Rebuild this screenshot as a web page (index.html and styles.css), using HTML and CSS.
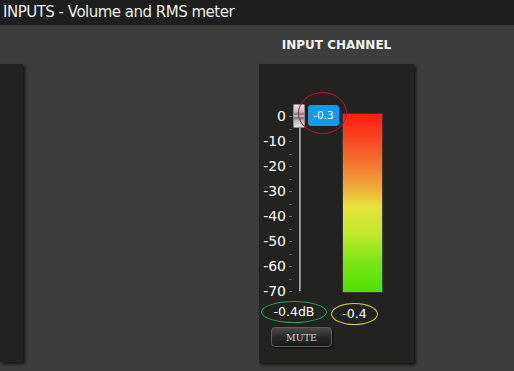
FILE: index.html
```html
<!DOCTYPE html>
<html lang="en" dir="ltr">
  <head>
    <meta charset="utf-8">
    <title>INPUTS - Volume and RMS meter</title>
    <link rel="stylesheet" href="styles.css">
  </head>
  <body>
    <div class="header">INPUTS - Volume and RMS meter</div>
    <div class="main">
      <div class="side-panel"></div>
      <div class="channel">
        <h3 class="channel-title">INPUT CHANNEL</h3>
        <div class="panel">
          <div class="meter-row">
            <div class="scale">
              <div class="mark">0</div>
              <div class="mark">-10</div>
              <div class="mark">-20</div>
              <div class="mark">-30</div>
              <div class="mark">-40</div>
              <div class="mark">-50</div>
              <div class="mark">-60</div>
              <div class="mark">-70</div>
            </div>
            <div class="track">
              <div class="track-line"></div>
              <div class="knob"></div>
            </div>
            <div class="meter-col">
              <div class="value-tip">-0.3</div>
              <div class="ring ring-red"></div>
              <div class="bar"></div>
            </div>
          </div>
          <div class="readouts">
            <div class="readout readout-db">-0.4dB</div>
            <div class="readout readout-rms">-0.4</div>
          </div>
          <button type="button" class="mute">MUTE</button>
        </div>
      </div>
    </div>
  </body>
</html>
```

FILE: styles.css
```css
body {
  margin: 0;
  width: 514px;
  height: 371px;
  overflow: hidden;
  background-color: #3d3d3d;
  font-family: "DejaVu Sans", Verdana, sans-serif;
  color: #fff;
}

.header {
  height: 25px;
  line-height: 24px;
  padding-left: 3px;
  background-color: #1e1e1e;
  color: #ececec;
  font-size: 15px;
  letter-spacing: -0.5px;
}

.main {
  display: flex;
}

/* Channel to the left, mostly off screen */
.side-panel {
  width: 23px;
  height: 298px;
  margin-top: 39px;
  background-color: #222220;
  box-shadow: 2px 2px 3px #141414;
}

.channel {
  margin-left: 236px;
  width: 155px;
}

.channel-title {
  margin: 0;
  height: 39px;
  padding-top: 13px;
  box-sizing: border-box;
  text-align: center;
  font-size: 12px;
  line-height: 14px;
  font-weight: bold;
  color: #f2f2f2;
}

.panel {
  height: 299px;
  background-color: #222220;
  box-shadow: 2px 2px 3px #141414;
}

.meter-row {
  display: flex;
  align-items: flex-start;
  padding-top: 40px;
}

/* dB scale with ticks */
.scale {
  width: 33px;
}

.mark {
  position: relative;
  height: 25px;
  line-height: 25px;
  padding-right: 6px;
  text-align: right;
  font-size: 14px;
}

.mark:after {
  position: absolute;
  content: "";
  right: 0;
  top: 12px;
  width: 3px;
  height: 1px;
  background-color: #707070;
}

.mark:before {
  position: absolute;
  content: "";
  right: 0;
  top: 25px;
  width: 3px;
  height: 1px;
  background-color: #5c5c5c;
}

.mark:last-child:before {
  display: none;
}

/* Volume slider */
.track {
  position: relative;
  width: 16px;
}

.track-line {
  width: 2px;
  height: 187px;
  margin-left: 7px;
  background: linear-gradient(to right, #b0b0b0, #7a7a7a);
}

.knob {
  position: absolute;
  left: 1px;
  top: 0;
  width: 10px;
  height: 22px;
  border: 1px solid #8a8a8a;
  border-radius: 1px;
  background: linear-gradient(to bottom, #e4e4e4 0, #bdbdbd 30%, #7a7a7a 42%, #d0d0d0 50%, #6e6e6e 58%, #b8b8b8 70%, #e0e0e0 100%);
}

/* Meter */
.meter-col {
  position: relative;
  padding-left: 34px;
}

.value-tip {
  position: absolute;
  left: 0;
  top: 1px;
  width: 31px;
  height: 21px;
  line-height: 21px;
  border-radius: 3px;
  background-color: #1599ec;
  text-align: center;
  font-size: 10.5px;
  color: #fff;
}

.ring {
  position: absolute;
  border-radius: 50%;
  border: 1px solid;
}

.ring-red {
  left: -10px;
  top: -12px;
  width: 47px;
  height: 40px;
  border-color: #b3163a;
}

.bar {
  width: 39px;
  height: 178px;
  margin-top: 9px;
  border: 1px solid #3a3a30;
  background: linear-gradient(to bottom, #ff1c10 0%, #f55a28 20%, #f09a38 38%, #e8e23e 52%, #bfe82a 68%, #78e414 84%, #4fe000 100%);
}

/* Readouts */
.readouts {
  display: flex;
  align-items: flex-start;
  gap: 4px;
  margin-top: -3px;
  padding-left: 2px;
}

.readout {
  border-radius: 50%;
  border: 1px solid;
  text-align: center;
  font-size: 12.5px;
}

.readout-db {
  width: 64px;
  height: 20px;
  line-height: 20px;
  border-color: #2c9a52;
}

.readout-rms {
  width: 45px;
  height: 20px;
  line-height: 20px;
  margin-top: 2px;
  border-color: #d9cf3a;
}

.mute {
  display: block;
  width: 61px;
  height: 20px;
  margin: 2px 0 0 12px;
  padding: 0;
  border: 1px solid #5e5e5e;
  border-radius: 4px;
  background: linear-gradient(to bottom, #4a4a4a, #262626 55%, #1a1a1a);
  box-shadow: 1px 1px 2px #0c0c0c;
  font-family: "DejaVu Serif", "Liberation Serif", serif;
  font-size: 9.5px;
  color: #d0d0d0;
  cursor: pointer;
}
```
